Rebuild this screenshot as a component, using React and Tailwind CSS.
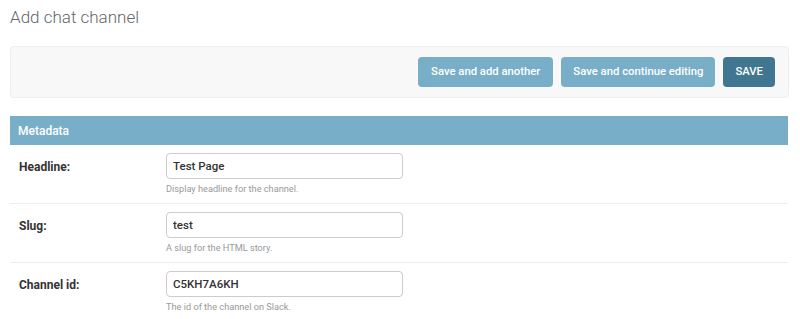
const FIELDS = [
  { label: 'Headline:', value: 'Test Page', help: 'Display headline for the channel.' },
  { label: 'Slug:', value: 'test', help: 'A slug for the HTML story.' },
  { label: 'Channel id:', value: 'C5KH7A6KH', help: 'The id of the channel on Slack.' },
]

function FormRow({ field }) {
  return (
    <div className="flex border-b border-[#eee] pt-[8px] pb-[7px] pl-[9px]">
      <label className="w-[147px] shrink-0 pt-[6px] text-[12px] font-bold text-[#333] leading-[16px]">
        {field.label}
      </label>
      <div className="flex flex-col">
        <input
          readOnly
          value={field.value}
          className="w-[237px] h-[26px] border border-[#ccc] rounded-[4px] px-[6px] text-[11.5px] font-medium text-[#333] outline-none bg-white"
        />
        <p className="mt-[3px] text-[9.2px] leading-[14px] text-[#999]">{field.help}</p>
      </div>
    </div>
  )
}

export default function App() {
  return (
    <div className="w-[800px] h-[319px] bg-white px-[10px] overflow-hidden" style={{ fontFamily: 'Roboto, "Liberation Sans", sans-serif' }}>
      <h1 className="pt-[5px] text-[17px] font-light text-[#666] leading-[24px]">Add chat channel</h1>

      <div className="mt-[17px] h-[52px] w-[779px] flex items-center justify-end gap-[8px] pr-[13px] bg-[#f8f8f8] border border-[#eee] rounded-[4px]">
        <button className="h-[30px] px-[13px] rounded-[4px] bg-[#79aec8] text-white text-[11.3px] font-medium">
          Save and add another
        </button>
        <button className="h-[30px] px-[12px] rounded-[4px] bg-[#79aec8] text-white text-[11.3px] font-medium">
          Save and continue editing
        </button>
        <button className="h-[30px] px-[12px] rounded-[4px] bg-[#417690] text-white text-[11.3px] font-medium">
          SAVE
        </button>
      </div>

      <div className="mt-[18px] w-[778px]">
        <h2 className="h-[29px] flex items-center px-[8px] bg-[#79aec8] text-white text-[12px] font-medium">
          Metadata
        </h2>
        {FIELDS.map((field) => (
          <FormRow key={field.label} field={field} />
        ))}
      </div>
    </div>
  )
}
